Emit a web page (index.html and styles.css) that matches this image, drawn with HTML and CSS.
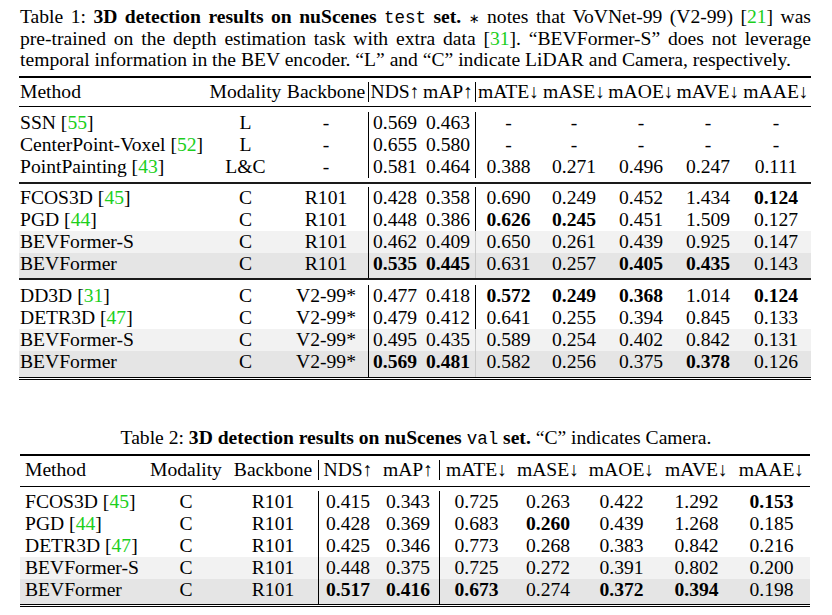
FILE: index.html
```html
<!DOCTYPE html>
<html>
<head>
<meta charset="utf-8">
<link rel="stylesheet" href="styles.css">
</head>
<body>
<div class="page">
  <div class="caption cap1">
    <span class="line just">Table 1: <b>3D detection results on nuScenes <span class="tt">test</span> set.</b> <span class="ast">∗</span> notes that VoVNet-99 (V2-99) [<span class="cite">21</span>] was</span>
    <span class="line just">pre-trained on the depth estimation task with extra data [<span class="cite">31</span>]. “BEVFormer-S” does not leverage</span>
    <span class="line">temporal information in the BEV encoder. “L” and “C” indicate LiDAR and Camera, respectively.</span>
  </div>

  <div class="tbl t1">
    <div class="rule thick"></div>
    <div class="row head">
      <span>Method</span><span>Modality</span><span>Backbone</span><span class="vl">NDS↑</span><span>mAP↑</span><span class="vl vl2">mATE↓</span><span>mASE↓</span><span>mAOE↓</span><span>mAVE↓</span><span>mAAE↓</span>
    </div>
    <div class="rule thin"></div>
    <div class="group g1">
      <div class="row"><span>SSN [<span class="cite">55</span>]</span><span>L</span><span>-</span><span class="vl">0.569</span><span>0.463</span><span class="vl vl2">-</span><span>-</span><span>-</span><span>-</span><span>-</span></div>
      <div class="row"><span>CenterPoint-Voxel [<span class="cite">52</span>]</span><span>L</span><span>-</span><span class="vl">0.655</span><span>0.580</span><span class="vl vl2">-</span><span>-</span><span>-</span><span>-</span><span>-</span></div>
      <div class="row"><span>PointPainting [<span class="cite">43</span>]</span><span>L&amp;C</span><span>-</span><span class="vl">0.581</span><span>0.464</span><span class="vl vl2">0.388</span><span>0.271</span><span>0.496</span><span>0.247</span><span>0.111</span></div>
    </div>
    <div class="rule mid"></div>
    <div class="group g2">
      <div class="row"><span>FCOS3D [<span class="cite">45</span>]</span><span>C</span><span>R101</span><span class="vl">0.428</span><span>0.358</span><span class="vl vl2">0.690</span><span>0.249</span><span>0.452</span><span>1.434</span><span class="b">0.124</span></div>
      <div class="row"><span>PGD [<span class="cite">44</span>]</span><span>C</span><span>R101</span><span class="vl">0.448</span><span>0.386</span><span class="vl vl2 b">0.626</span><span class="b">0.245</span><span>0.451</span><span>1.509</span><span>0.127</span></div>
      <div class="row light"><span>BEVFormer-S</span><span>C</span><span>R101</span><span class="vl">0.462</span><span>0.409</span><span class="vl vl2">0.650</span><span>0.261</span><span>0.439</span><span>0.925</span><span>0.147</span></div>
      <div class="row dark last"><span>BEVFormer</span><span>C</span><span>R101</span><span class="vl b">0.535</span><span class="b">0.445</span><span class="vl vl2">0.631</span><span>0.257</span><span class="b">0.405</span><span class="b">0.435</span><span>0.143</span></div>
    </div>
    <div class="rule mid"></div>
    <div class="group g3">
      <div class="row"><span>DD3D [<span class="cite">31</span>]</span><span>C</span><span>V2-99*</span><span class="vl">0.477</span><span>0.418</span><span class="vl vl2 b">0.572</span><span class="b">0.249</span><span class="b">0.368</span><span>1.014</span><span class="b">0.124</span></div>
      <div class="row"><span>DETR3D [<span class="cite">47</span>]</span><span>C</span><span>V2-99*</span><span class="vl">0.479</span><span>0.412</span><span class="vl vl2">0.641</span><span>0.255</span><span>0.394</span><span>0.845</span><span>0.133</span></div>
      <div class="row light"><span>BEVFormer-S</span><span>C</span><span>V2-99*</span><span class="vl">0.495</span><span>0.435</span><span class="vl vl2">0.589</span><span>0.254</span><span>0.402</span><span>0.842</span><span>0.131</span></div>
      <div class="row dark last"><span>BEVFormer</span><span>C</span><span>V2-99*</span><span class="vl b">0.569</span><span class="b">0.481</span><span class="vl vl2">0.582</span><span>0.256</span><span>0.375</span><span class="b">0.378</span><span>0.126</span></div>
    </div>
    <div class="rule double"></div>
  </div>

  <div class="caption cap2">Table 2: <b>3D detection results on nuScenes</b> <span class="tt">val</span> <b>set.</b> “C” indicates Camera.</div>

  <div class="tbl t2">
    <div class="rule thick"></div>
    <div class="row head">
      <span>Method</span><span>Modality</span><span>Backbone</span><span class="vl">NDS↑</span><span>mAP↑</span><span class="vl">mATE↓</span><span>mASE↓</span><span>mAOE↓</span><span>mAVE↓</span><span>mAAE↓</span>
    </div>
    <div class="rule thin"></div>
    <div class="group g4">
      <div class="row"><span>FCOS3D [<span class="cite">45</span>]</span><span>C</span><span>R101</span><span class="vl">0.415</span><span>0.343</span><span class="vl">0.725</span><span>0.263</span><span>0.422</span><span>1.292</span><span class="b">0.153</span></div>
      <div class="row"><span>PGD [<span class="cite">44</span>]</span><span>C</span><span>R101</span><span class="vl">0.428</span><span>0.369</span><span class="vl">0.683</span><span class="b">0.260</span><span>0.439</span><span>1.268</span><span>0.185</span></div>
      <div class="row"><span>DETR3D [<span class="cite">47</span>]</span><span>C</span><span>R101</span><span class="vl">0.425</span><span>0.346</span><span class="vl">0.773</span><span>0.268</span><span>0.383</span><span>0.842</span><span>0.216</span></div>
      <div class="row light"><span>BEVFormer-S</span><span>C</span><span>R101</span><span class="vl">0.448</span><span>0.375</span><span class="vl">0.725</span><span>0.272</span><span>0.391</span><span>0.802</span><span>0.200</span></div>
      <div class="row dark last"><span>BEVFormer</span><span>C</span><span>R101</span><span class="vl b">0.517</span><span class="b">0.416</span><span class="vl b">0.673</span><span>0.274</span><span class="b">0.372</span><span class="b">0.394</span><span>0.198</span></div>
    </div>
    <div class="rule double"></div>
  </div>
</div>
</body>
</html>
```

FILE: styles.css
```css
html, body {
  margin: 0;
  padding: 0;
  background: #ffffff;
}

body {
  font-family: "Liberation Serif", "Times New Roman", serif;
  color: #000;
  font-size: 19.6px;
}

.page {
  padding-top: 6px;
}

.caption {
  line-height: 21.5px;
}

.cap1 {
  margin-left: 20px;
  width: 791px;
}

.line {
  display: block;
  height: 21.5px;
}

.just {
  text-align: justify;
  text-align-last: justify;
}

.tt {
  font-family: "Liberation Mono", "DejaVu Sans Mono", monospace;
  font-size: 17.5px;
  font-weight: normal;
}

.ast {
  font-family: "DejaVu Sans", sans-serif;
  font-size: 13px;
  line-height: 0;
}

.cite {
  color: #1ccf1c;
}

.b {
  font-weight: bold;
}

.tbl {
  display: flex;
  flex-direction: column;
}

.t1 {
  margin: 5.5px 0 0 19px;
  width: 792px;
  --cols: 188px 77px 84px 53px 54px 66px 66px 68px 66px 70px;
  --pad: 1px;
}

.t2 {
  margin: 3.5px 0 0 20px;
  width: 790px;
  --cols: 124px 84px 90px 59px 62px 74px 70px 77px 73px 77px;
  --pad: 5px;
}

.rule {
  background: #000;
}

.rule.thick {
  height: 2px;
}

.rule.thin {
  height: 1px;
}

.rule.mid {
  height: 2px;
  background: #1a1a1a;
}

.rule.double {
  height: 0;
  border-top: 3px double #000;
  background: none;
}

.row {
  display: grid;
  grid-template-columns: var(--cols);
  height: 22px;
  line-height: 22px;
  white-space: nowrap;
}

.row > span {
  text-align: center;
}

.row > span:first-child {
  text-align: left;
  padding-left: var(--pad);
}

.row > .vl {
  border-left: 1px solid #000;
}

.head {
  height: auto;
  line-height: 20px;
  padding: 4px 0;
}

.t2 .head {
  padding: 4px 0 6px;
}

.row.light {
  background: #f2f2f2;
}

.row.dark {
  background: #e5e5e5;
}

.t1 .row.light > .vl2,
.t1 .row.dark > .vl2 {
  border-left-color: #c9c9c9;
}

.g1 {
  padding: 5px 0 4px;
}

.g2 {
  padding: 3px 0 0;
}

.g2 .last {
  height: 25px;
}

.g3 {
  padding: 5px 0 0;
}

.g3 .last {
  height: 26px;
}

.g4 {
  padding: 4px 0 0;
}

.g4 .last {
  height: 25px;
}

.cap2 {
  margin-top: 47px;
  text-align: center;
  width: 832px;
}
```
